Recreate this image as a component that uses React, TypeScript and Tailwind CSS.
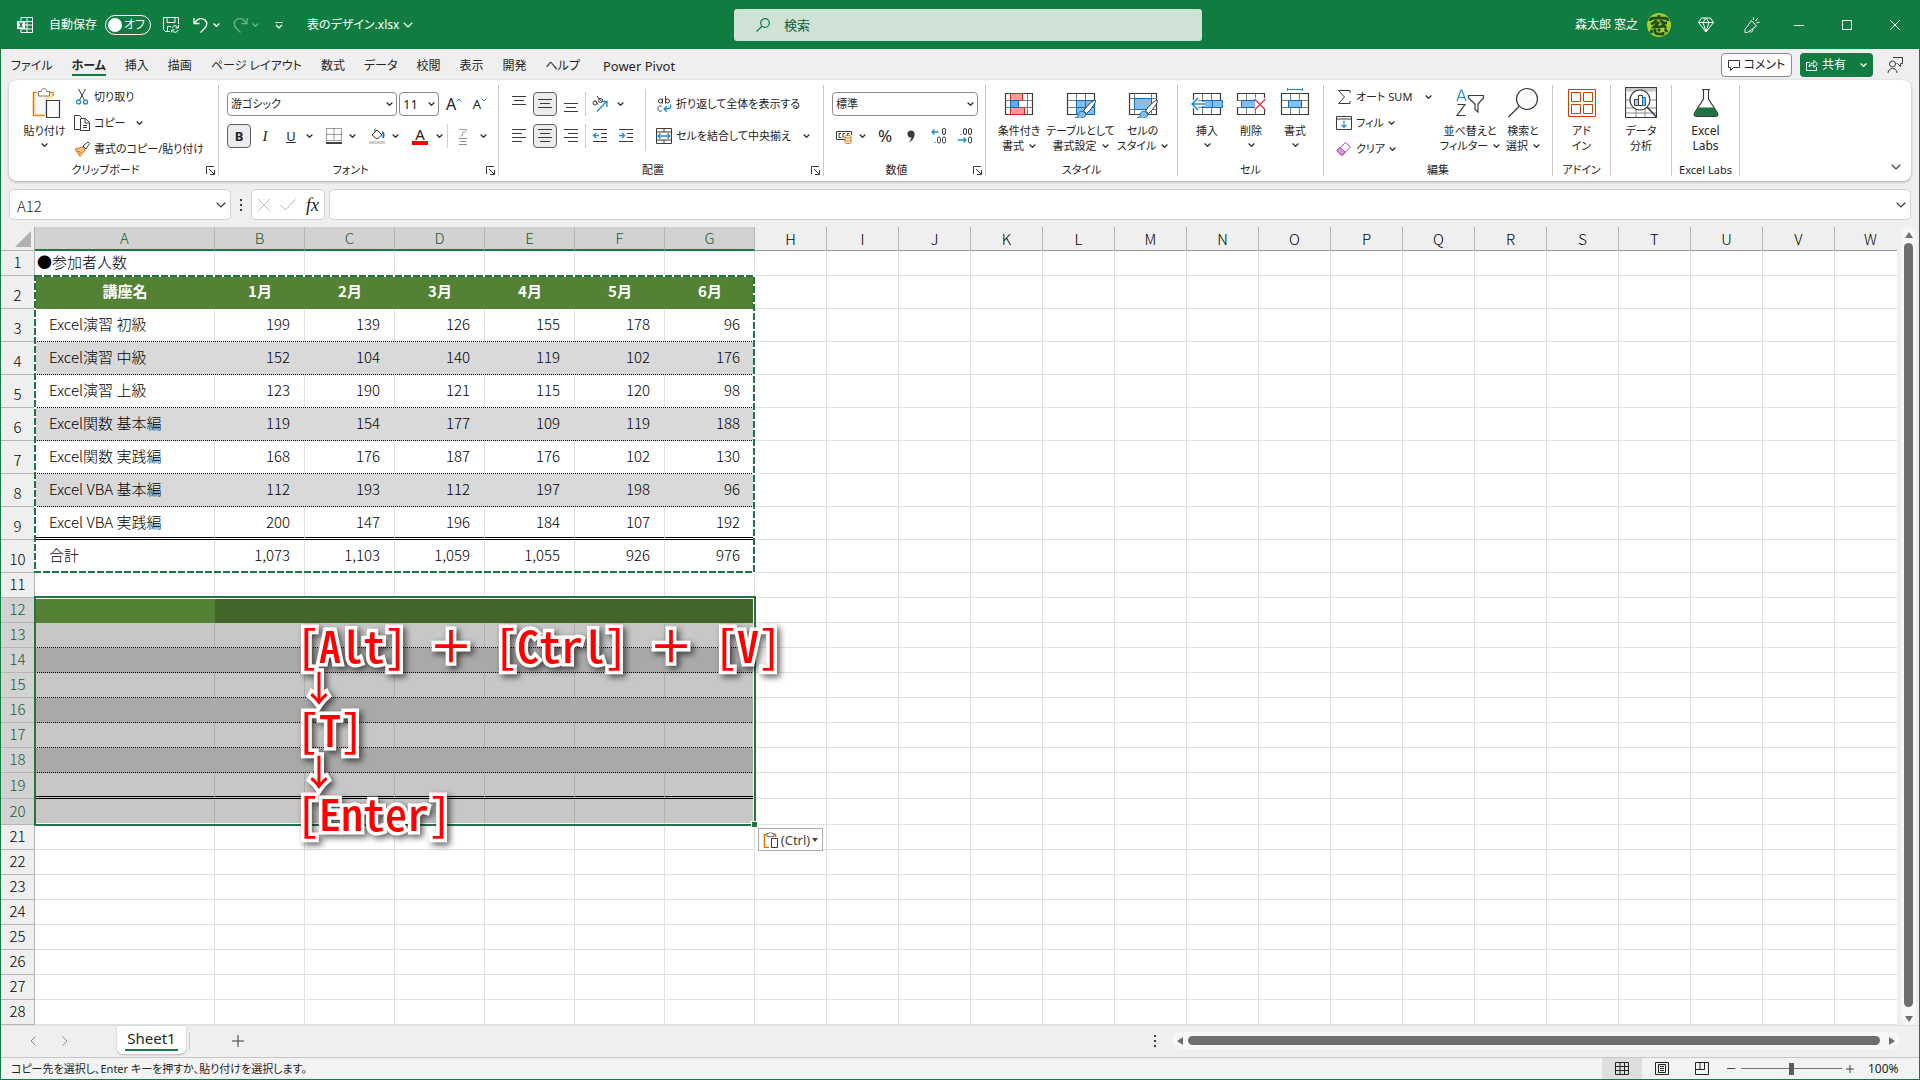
import type { ReactNode } from "react";

const INK = "#3b3a39";

const Chev = ({ big, light }: { big?: boolean; light?: boolean }) => (
    <svg
        viewBox="0 0 10 6"
        className={`${big ? "w-[10px] h-[6px]" : "w-[7px] h-[4px]"} shrink-0`}
        fill="none"
        stroke={light ? "#fff" : INK}
        strokeWidth={big ? 1.2 : 2}
    >
        <path d="M.7.8 5 5 9.3.8" />
    </svg>
);

const Launcher = () => (
    <svg viewBox="0 0 9 9" className="w-[9px] h-[9px]" fill="none" stroke={INK}>
        <path d="M.5 8V.5H8M3 3l5 5M8.5 4v4.5H4" />
    </svg>
);

const Icon = ({ children, size = "s", stroke = INK }: { children: ReactNode; size?: "s" | "l"; stroke?: string }) => (
    <svg
        viewBox={size === "s" ? "0 0 16 16" : "0 0 32 32"}
        className={size === "s" ? "w-4 h-4 shrink-0" : "w-8 h-8 shrink-0"}
        fill="none"
        stroke={stroke}
        strokeWidth="1"
    >
        {children}
    </svg>
);

const Group: React.FC<{ label?: string; width: string; launcher?: boolean; children: ReactNode }> = ({
    label,
    width,
    launcher,
    children,
}) => (
    <section className={`${width} relative shrink-0 flex flex-col h-[91px] border-r border-[#c8c8c8]`}>
        <div className="flex h-[78px]">{children}</div>
        <div className={`text-center h-[13px] leading-[13px] whitespace-nowrap ${launcher ? "pr-4" : ""}`}>{label}</div>
        {launcher && (
            <button aria-label={`${label}の設定`} className="absolute right-[3px] bottom-px">
                <Launcher />
            </button>
        )}
    </section>
);

const BigButton: React.FC<{ icon: ReactNode; lines: string[]; width: string; chev?: "inline" | "below" }> = ({
    icon,
    lines,
    width,
    chev,
}) => (
    <button className={`${width} shrink-0 flex flex-col items-center h-[77px] pt-px leading-[15px] whitespace-nowrap`}>
        {icon}
        {lines.map((line, i) => (
            <span key={line} className={`flex items-center gap-[5px] ${i === 0 ? "mt-[5px]" : ""}`}>
                {line}
                {chev === "inline" && i === lines.length - 1 && <Chev />}
            </span>
        ))}
        {chev === "below" && <span className="mt-[5px]"><Chev /></span>}
    </button>
);

const SmallButton: React.FC<{ icon: ReactNode; text: string; chev?: boolean }> = ({ icon, text, chev }) => (
    <button className="flex items-center h-[26px] whitespace-nowrap gap-1">
        {icon}
        <span>{text}</span>
        {chev && <Chev />}
    </button>
);

const Sep = () => <span className="w-px h-6 bg-[#d0d0d0] shrink-0" />;

const Tool: React.FC<{ name: string; on?: boolean; children: ReactNode }> = ({ name, on, children }) => (
    <button
        aria-label={name}
        className={`w-6 h-6 shrink-0 flex items-center justify-center rounded ${on ? "bg-[#ebebeb] border border-[#616161]" : ""}`}
    >
        {children}
    </button>
);

const Arrow = ({ name, width = "w-3" }: { name: string; width?: string }) => (
    <button aria-label={name} className={`${width} h-6 shrink-0 flex items-center justify-center`}>
        <Chev />
    </button>
);

const Combo: React.FC<{ name: string; value: string; width: string }> = ({ name, value, width }) => (
    <label className={`${width} h-6 shrink-0 flex items-center relative border border-[#8a8a8a] rounded bg-white`}>
        <span className="sr-only">{name}</span>
        <select className="appearance-none w-full h-[22px] pl-[3px] bg-transparent leading-[22px]">
            <option>{value}</option>
        </select>
        <span className="absolute right-[3px] pointer-events-none">
            <Chev />
        </span>
    </label>
);

const Lines = ({ rows }: { rows: [number, number, number][] }) => (
    <Icon>
        {rows.map(([x1, x2, y]) => (
            <path key={y} d={`M${x1} ${y}H${x2}`} />
        ))}
    </Icon>
);

const CellsIcon = ({ children }: { children?: ReactNode }) => (
    <Icon size="l">
        <path d="M2.5 7.5h27v21h-27z" fill="#fff" strokeWidth="1.2" />
        <path d="M2.5 14.5h27M2.5 21.5h27M11.5 7.5v21M20.5 7.5v21" stroke="#7a7a7a" />
        {children}
    </Icon>
);

const Brush = () => (
    <>
        <path d="M30.5 14.5c1 1-5 10-9 13l-3-2.500c3-5 10-11.500 12-10.500z" fill="#fff" />
        <path d="M18 25.500c-4-1-5 2-5 4-.5 2-2 2-3 2 3 1.500 11 1.500 11-3.500z" fill="#83beec" stroke="#0f6cbd" />
    </>
);

const PasteIcon = () => (
    <Icon size="l">
        <path d="M8 6.500H4.500v23H16M24 10V6.500h-4" stroke="#d97706" strokeWidth="1.500" />
        <path d="M6 7.500h17v4h-6v17H6z" fill="#f8f8f8" stroke="#fbd88a" strokeWidth="1.500" />
        <path d="M9.500 10V5.500h3c0-4 5-4 5 0h3V10z" fill="#fff" stroke="#7a7a7a" />
        <path d="M17.500 14.500h13v17h-13z" fill="#fafafa" strokeWidth="1.200" />
    </Icon>
);

const tabs = ["ファイル", "ホーム", "挿入", "描画", "ページ レイアウト", "数式", "データ", "校閲", "表示", "開発", "ヘルプ", "Power Pivot"];

const TitleBar = () => (
    <header className="h-[49px] shrink-0 bg-[#107c41] text-white flex items-center">
        <div className="flex-1 flex items-center pl-4 whitespace-nowrap">
            <svg viewBox="0 0 16 16" className="w-4 h-4" fill="none" stroke="#fff">
                <path d="M4 4V.5h11.500v15H4V12M4 4.500h11.500M8 8h7.500M4 12h11.500M10 .5v15" />
                <path d="M0 4h8v8H0z" fill="#fff" stroke="none" />
                <path d="m2.500 5.500 3 5m0-5-3 5" stroke="#107c41" strokeWidth="1.400" />
            </svg>
            <span className="ml-4">自動保存</span>
            <button role="switch" aria-checked="false" aria-label="自動保存" className="ml-2 w-[46px] h-5 rounded-full border border-white flex items-center pl-[2px] pr-[5px] justify-between">
                <span className="w-[14px] h-[14px] rounded-full bg-white" />
                オフ
            </button>
            <button aria-label="保存" className="ml-3">
                <Icon stroke="#fff">
                    <path d="M7 14.500H2.500l-2-2V.5h15V7M4 .5v5h8v-5M4.500 14V9.500H8" />
                    <path d="M9 11c1-3 5-3 6 0M15.500 8v3h-3M15 13c-1 3-5 3-6 0M8.500 15.500V13h3" />
                </Icon>
            </button>
            <button aria-label="元に戻す" className="ml-[14px] flex items-center gap-1">
                <Icon stroke="#fff">
                    <path d="M1 1v5.500h5.500M1.200 6.300C5 1 9 .5 12 3c3 3 2 6-1 9l-3.500 3.500" strokeWidth="1.300" />
                </Icon>
                <Chev light />
            </button>
            <button aria-label="やり直し" className="ml-3 flex items-center gap-1 opacity-40">
                <Icon stroke="#fff">
                    <path d="M15 1v5.500H9.500M14.800 6.300C11 1 7 .5 4 3c-3 3-2 6 1 9l3.500 3.500" strokeWidth="1.300" />
                </Icon>
                <Chev light />
            </button>
            <button aria-label="クイック アクセスのカスタマイズ" className="ml-4">
                <svg viewBox="0 0 8 8" className="w-2 h-2" fill="none" stroke="#fff" strokeWidth="1.200">
                    <path d="M.5 1.500h7M1 4l3 3 3-3" />
                </svg>
            </button>
            <button className="ml-6 flex items-center gap-1">
                表のデザイン.xlsx
                <Chev big light />
            </button>
        </div>
        <label className="w-[468px] h-8 rounded-[3px] bg-[#cee2d6] flex items-center pl-[22px] gap-[14px] text-[#185c37]">
            <svg viewBox="0 0 14 14" className="w-[14px] h-[14px]" fill="none" stroke="#107c41" strokeWidth="1.200">
                <circle cx="9" cy="5" r="4.300" />
                <path d="M6 8.200.500 13.500" />
            </svg>
            <input aria-label="検索" placeholder="検索" className="bg-transparent flex-1 outline-none text-[13px] placeholder:text-[#185c37]" />
        </label>
        <div className="flex-1 flex items-center justify-end whitespace-nowrap">
            <span>森太郎 窓之</span>
            <svg viewBox="0 0 24 24" className="ml-[9px] w-6 h-6" fill="none">
                <circle cx="12" cy="12" r="12" fill="#a4cf2e" />
                <path
                    d="M3 8c0-3 3-3 9-3s9 0 9 3M12 2v4M9 7c0 2-2 3-5 4m10-4c0 3 3 3 6 3M12 9l-5 5c4 0 7 0 11-1m-3-3 4 5M5 17l-1 3m4-4c-1 6 3 5 8 5v-2m-5-3 2 2m5-2 2 3"
                    stroke="#1f4d16"
                    strokeWidth="2.800"
                />
            </svg>
            <button aria-label="Premium" className="ml-[27px]">
                <Icon stroke="#fff">
                    <path d="M3.500 1h9l3 4.500L8 15 .5 5.500zM.5 5.500h15M5 5.500 8 15l3-9.500L8 1 5 5.500" />
                </Icon>
            </button>
            <button aria-label="新機能" className="ml-[30px]">
                <Icon stroke="#fff">
                    <path d="M7.500 3.500 1 12.500v3h2.500l9-6.500zM5.500 14.500c2 1.500 4-.5 3-2.500M9.500 3V.5M11.500 4l2.500-3M12.500 6l3-1" />
                </Icon>
            </button>
            <button aria-label="最小化" className="ml-[34px]">
                <svg viewBox="0 0 10 10" className="w-[10px] h-[10px]" stroke="#fff"><path d="M0 5.500h10" /></svg>
            </button>
            <button aria-label="最大化" className="ml-[38px]">
                <svg viewBox="0 0 10 10" className="w-[10px] h-[10px]" stroke="#fff" fill="none"><path d="M.5.5h9v9h-9z" /></svg>
            </button>
            <button aria-label="閉じる" className="ml-[38px] mr-[19px]">
                <svg viewBox="0 0 10 10" className="w-[10px] h-[10px]" stroke="#fff"><path d="m0 0 10 10M10 0 0 10" /></svg>
            </button>
        </div>
    </header>
);

const TabRow = () => (
    <nav className="h-[31px] shrink-0 flex items-center pl-[10px] pr-4">
        <div className="flex-1 flex gap-[19px] pt-[2px] whitespace-nowrap">
            {tabs.map(t => (
                <button
                    key={t}
                    className={t === "ホーム" ? "relative font-bold" : t === "Power Pivot" ? "ml-1 text-[13px]" : ""}
                >
                    {t}
                    {t === "ホーム" && <span className="absolute inset-x-0 -bottom-[2px] h-[2px] bg-[#107c41]" />}
                </button>
            ))}
        </div>
        <button className="w-[71px] h-6 bg-white border border-[#8a8a8a] rounded flex items-center justify-center gap-1">
            <svg viewBox="0 0 12 12" className="w-3 h-3" fill="none" stroke={INK}><path d="M.5 1.500h11v7h-6l-3 3v-3h-2z" /></svg>
            コメント
        </button>
        <button className="ml-2 w-[73px] h-6 bg-[#107c41] text-white rounded flex items-center justify-between px-[6px]">
            <span className="flex items-center gap-1">
                <svg viewBox="0 0 12 12" className="w-3 h-3" fill="none" stroke="#fff"><path d="M4 3.500H.5v8h10V8M3 8c0-3 2-4 5-4V1.500L11.500 5 8 8.500V6C6 6 4 6.500 3 8z" /></svg>
                共有
            </span>
            <Chev light />
        </button>
        <button aria-label="会話" className="ml-[14px]">
            <Icon>
                <path d="M6 .5h9.500v6h-2v3l-3-3H9.500M1 16c0-6 9-6 9 0" />
                <circle cx="5.500" cy="7" r="3" />
            </Icon>
        </button>
    </nav>
);

const Ribbon = () => (
    <div className="mx-2 h-[101px] shrink-0 bg-white rounded-lg shadow-[0_1px_3px_rgba(0,0,0,0.3)] flex pt-[5px] relative text-[11px]">
        <Group label="クリップボード" width="w-[210px]" launcher>
            <span className="w-[6px]" />
            <BigButton icon={<PasteIcon />} lines={["貼り付け"]} width="w-[59px]" chev="below" />
            <div className="flex flex-col items-start -mt-px">
                <SmallButton text="切り取り" icon={<Icon><path d="m4.500 0 6 11M11.500 0l-6 11" /><circle cx="4.500" cy="13" r="2" stroke="#1f8ad2" strokeWidth="1.300" /><circle cx="11.500" cy="13" r="2" stroke="#1f8ad2" strokeWidth="1.300" /></Icon>} />
                <div className="flex items-center gap-2">
                    <SmallButton text="コピー" icon={<Icon><path d="M6 14.500H.5V.5h5l2 2M6.500 3.500h5l4 4v8h-9zM11 4v4h4.500M9 10.500h4M9 12.500h4" /></Icon>} />
                    <Arrow name="コピーのオプション" />
                </div>
                <SmallButton text="書式のコピー/貼り付け" icon={<Icon stroke="#d97706"><path d="m1 8 8-2 2 3-5 6.500z" fill="#f9c58d" /><path d="m9 5 5-4 1.500 1.500L12 8z" stroke={INK} /><path d="m3 10 3 1m-1 2 2-2" /></Icon>} />
            </div>
        </Group>
        <Group label="フォント" width="w-[280px]" launcher>
            <div className="pl-2 pt-[7px] flex flex-col gap-2">
                <div className="flex items-center">
                    <Combo name="フォント名" value="游ゴシック" width="w-[170px]" />
                    <span className="ml-[2px] text-[13px]"><Combo name="サイズ" value="11" width="w-[40px]" /></span>
                    <span className="ml-[3px] flex gap-[2px]">
                        <Tool name="拡大"><span className="text-[16px] leading-5">A</span><svg viewBox="0 0 6 4" className="w-[6px] h-1 mb-2" fill="none" stroke="#1f8ad2"><path d="m.5 3.500 2.500-2.500 2.500 2.500" /></svg></Tool>
                        <Tool name="縮小"><span className="text-[13px] leading-5">A</span><svg viewBox="0 0 6 4" className="w-[6px] h-1 mb-2" fill="none" stroke="#1f8ad2"><path d="m.5.5 2.500 2.500L5.500.5" /></svg></Tool>
                    </span>
                </div>
                <div className="flex items-center">
                    <Tool name="太字" on><b className="text-[13px]">B</b></Tool>
                    <span className="ml-[2px] flex gap-[2px]">
                        <Tool name="斜体"><i className="font-['Liberation_Serif'] text-[15px]">I</i></Tool>
                        <Tool name="下線"><u className="text-[13px]">U</u></Tool>
                    </span>
                    <Arrow name="下線の種類" />
                    <span className="ml-[5px] mr-[2px]"><Sep /></span>
                    <Tool name="罫線"><Icon><path d="M.5.5h15v12H.5zM8 .5v12M.5 6.500h15" strokeDasharray="1 1" /><path d="M0 15h16" strokeWidth="1.500" stroke="#000" /></Icon></Tool>
                    <Arrow name="罫線の種類" />
                    <span className="ml-[5px] mr-[2px]"><Sep /></span>
                    <Tool name="塗りつぶし"><Icon><path d="m3 7 5-5 5 5-5 4zM6 4V.5" /><path d="M13 4c2 1 2 3 1 6" stroke="#1f6db5" strokeWidth="2" /><path d="M0 14.500h16" stroke="#d0d0d0" strokeWidth="3" /></Icon></Tool>
                    <Arrow name="塗りつぶしの色" />
                    <button aria-label="フォントの色" className="flex flex-col items-center ml-[11px] mr-[3px]">
                        <span className="text-[15px] leading-[13px]">A</span>
                        <span className="w-4 h-1 bg-[#f00]" />
                    </button>
                    <Arrow name="フォントの色の種類" width="w-4" />
                    <Sep />
                    <button aria-label="ふりがな" className="flex flex-col items-center text-[9px] leading-[10px] text-[#8a8a8a] ml-[10px] w-[10px]">
                        ア
                        <svg viewBox="0 0 8 7" className="w-2 h-[7px]" stroke="#8a8a8a"><path d="M0 .500h8M1 3.500h6M0 6.500h8" /></svg>
                    </button>
                    <span className="ml-[9px]"><Arrow name="ふりがなの種類" /></span>
                </div>
            </div>
        </Group>
        <Group label="配置" width="w-[325px]" launcher>
            <div className="pl-2 pt-[7px] flex flex-col gap-2">
                <div className="flex items-center gap-[2px]">
                    <Tool name="上揃え"><Lines rows={[[1, 15, 0.5], [3, 13, 4.5], [1, 15, 8.5]]} /></Tool>
                    <Tool name="上下中央" on><Lines rows={[[1, 15, 3.5], [3, 13, 7.5], [1, 15, 11.5]]} /></Tool>
                    <Tool name="下揃え"><Lines rows={[[1, 15, 7.5], [3, 13, 11.5], [1, 15, 15.5]]} /></Tool>
                    <Sep />
                    <Tool name="方向"><Icon><path d="M5 15.500 14.500 5.500M9.500 5.500h5.500V11" stroke="#1f8ad2" strokeWidth="1.300" /><circle cx="3" cy="7" r="2" /><circle cx="8.500" cy="4.500" r="2" /><path d="m3 4.500 3 4M5 0l4 5" /></Icon></Tool>
                    <Arrow name="方向の種類" />
                </div>
                <div className="flex items-center gap-[2px]">
                    <Tool name="左揃え"><Lines rows={[[1, 15, 1.5], [1, 11, 5.5], [1, 15, 9.5], [1, 11, 13.5]]} /></Tool>
                    <Tool name="中央揃え" on><Lines rows={[[1, 15, 1.5], [3, 13, 5.5], [1, 15, 9.5], [3, 13, 13.5]]} /></Tool>
                    <Tool name="右揃え"><Lines rows={[[1, 15, 1.5], [5, 15, 5.5], [1, 15, 9.5], [5, 15, 13.5]]} /></Tool>
                    <Sep />
                    <Tool name="インデントを減らす"><Icon><path d="M1 1.500h14M9 5.500h6M9 9.500h6M1 13.500h14" /><path d="M7 7.500H1.500M4 5 1.500 7.500 4 10" stroke="#1f8ad2" strokeWidth="1.300" /></Icon></Tool>
                    <Tool name="インデントを増やす"><Icon><path d="M1 1.500h14M9 5.500h6M9 9.500h6M1 13.500h14" /><path d="M1 7.500h5.500M4 5l2.500 2.500L4 10" stroke="#1f8ad2" strokeWidth="1.300" /></Icon></Tool>
                </div>
            </div>
            <div className="ml-[7px] mt-1 w-px h-[62px] bg-[#d0d0d0]" />
            <div className="pl-[10px] pt-[7px] flex flex-col gap-2">
                <button className="h-6 flex items-center gap-1 whitespace-nowrap">
                    <svg viewBox="0 0 16 16" className="w-4 h-4 shrink-0" fill="none" stroke={INK}>
                        <circle cx="4.500" cy="5" r="2" />
                        <path d="M6.500 2.500v5M9.500 0v7.500M6 10.500c-2-1.500-4 0-4 2s2 3.500 4 2" />
                        <circle cx="11.500" cy="5" r="2" />
                        <path d="M14.500 8.500c1 3-1 4.500-6 4.500M11 10l-3 3 3 3" stroke="#1f8ad2" strokeWidth="1.300" />
                    </svg>
                    折り返して全体を表示する
                </button>
                <button className="h-6 flex items-center gap-1 whitespace-nowrap">
                    <Icon><path d="M.5.5h15v15H.5zM.5 4h15M.5 12h15M8 .5V4M8 12v3.500" /><path d="M2 8h12M4.500 5.500 2 8l2.500 2.500M11.500 5.500 14 8l-2.500 2.500" stroke="#1f8ad2" strokeWidth="1.300" /></Icon>
                    セルを結合して中央揃え
                    <span className="ml-2"><Chev /></span>
                </button>
            </div>
        </Group>
        <Group label="数値" width="w-[162px]" launcher>
            <div className="pl-2 pt-[7px] flex flex-col gap-2">
                <Combo name="表示形式" value="標準" width="w-[146px]" />
                <div className="flex items-center">
                    <Tool name="通貨"><Icon><path d="M9 11.500H.5v-8h15V7M5 5.500H3v4h2M7 10V5.500h2M11.500 7V5.500h2" /><path d="M9 8.500c0-1.500 6-1.500 6 0v6c0 1.500-6 1.500-6 0zM9 9c0 1.500 6 1.500 6 0M9 12c0 1.500 6 1.500 6 0" stroke="#d97706" fill="#fff" /></Icon></Tool>
                    <Arrow name="通貨の種類" />
                    <span className="ml-[5px] flex gap-[2px]">
                        <Tool name="パーセント"><span className="text-[17px]">%</span></Tool>
                        <Tool name="桁区切り"><svg viewBox="0 0 8 13" className="w-2 h-[13px]" fill={INK}><circle cx="4" cy="4" r="3.500" /><path d="M7.500 4c0 4-2 7-6 8.500 2-2 3-4 3-6z" /></svg></Tool>
                    </span>
                    <span className="mx-[2px]"><Sep /></span>
                    <span className="flex gap-[2px]">
                        <Tool name="小数点以下を増やす">
                            <svg viewBox="0 0 16 16" className="w-4 h-4" fill="none" stroke={INK}>
                                <path d="M7.500 4H1M3.500 1.500 1 4l2.500 2.500" stroke="#1f8ad2" strokeWidth="1.300" />
                                <rect x="11.500" y=".5" width="3" height="6" rx="1.500" />
                                <rect x="6.500" y="9" width="3" height="6" rx="1.500" />
                                <rect x="11.500" y="9" width="3" height="6" rx="1.500" />
                                <path d="M3.500 14.500h1" />
                            </svg>
                        </Tool>
                        <Tool name="小数点以下を減らす">
                            <svg viewBox="0 0 16 16" className="w-4 h-4" fill="none" stroke={INK}>
                                <path d="M1 12h8M6.500 9.500 9 12l-2.500 2.500" stroke="#1f8ad2" strokeWidth="1.300" />
                                <rect x="6.500" y=".5" width="3" height="6" rx="1.500" />
                                <rect x="11.500" y=".5" width="3" height="6" rx="1.500" />
                                <rect x="11.500" y="9" width="3" height="6" rx="1.500" />
                                <path d="M3.500 6.500h1" />
                            </svg>
                        </Tool>
                    </span>
                </div>
            </div>
        </Group>
        <Group label="スタイル" width="w-[192px]">
            <span className="w-[2px]" />
            <BigButton
                width="w-[62px]"
                lines={["条件付き", "書式"]}
                chev="inline"
                icon={<Icon size="l"><path d="M2.500 7.500h27v21h-27z" fill="#fff" strokeWidth="1.200" /><path d="M2.500 14.500h27M2.500 21.500h27M7.500 7.500v21M24.500 7.500v21" stroke="#7a7a7a" /><path d="M7.500 7.500h12v7h-12zM7.500 21.500h14v7h-14z" fill="#ff9a9a" stroke="#e02020" /><path d="M7.500 14.500h8v7h-8z" fill="#60aee8" stroke="#0f6cbd" /></Icon>}
            />
            <BigButton
                width="w-[61px]"
                lines={["テーブルとして", "書式設定"]}
                chev="inline"
                icon={<CellsIcon><path d="M11.500 14.500h18v14h-18zM11.500 21.500h18M20.500 14.500v14" fill="#83beec" stroke="#0f6cbd" /><Brush /></CellsIcon>}
            />
            <BigButton
                width="w-[63px]"
                lines={["セルの", "スタイル"]}
                chev="inline"
                icon={<Icon size="l"><path d="M2.500 7.500h27v21h-27z" fill="#fff" strokeWidth="1.200" /><path d="M7.500 7.500v21M24.500 7.500v21M2.500 12.500h27M2.500 23.500h27" stroke="#7a7a7a" /><path d="M7.500 12.500h17v11h-17z" fill="#83beec" stroke="#0f6cbd" /><Brush /></Icon>}
            />
        </Group>
        <Group label="セル" width="w-[146px]">
            <span className="w-[7px]" />
            <BigButton width="w-[44px]" lines={["挿入"]} chev="below" icon={<CellsIcon><path d="M11.500 14.500h20v7h-20zM21.500 14.500v7" fill="#83beec" stroke="#0f6cbd" /><path d="M14 18H1M7 12l-6 6 6 6" stroke="#fff" strokeWidth="4" /><path d="M14 18H1M7 12l-6 6 6 6" stroke="#1f8ad2" strokeWidth="1.500" /></CellsIcon>} />
            <BigButton width="w-[44px]" lines={["削除"]} chev="below" icon={<CellsIcon><path d="M1 15h5v6H1z" fill="#fff" stroke="none" /><path d="M6.500 14.500h14v7h-14z" fill="#83beec" stroke="#0f6cbd" /><path d="M20 12h12v12H20z" fill="#fff" stroke="none" /><path d="m19.500 13 11 11m0-11-11 11" stroke="#f04040" strokeWidth="1.500" /></CellsIcon>} />
            <BigButton width="w-[44px]" lines={["書式"]} chev="below" icon={<CellsIcon><path d="M9.500 14.500h13v7h-13z" fill="#83beec" stroke="#0f6cbd" /><path d="M8.500 2v3m15-3v3m-15-1.500h15" stroke="#1f8ad2" /></CellsIcon>} />
        </Group>
        <Group label="編集" width="w-[229px]">
            <div className="pl-3 w-[117px] flex flex-col items-start -mt-px">
                <div className="flex items-center gap-[10px]">
                    <SmallButton text="オート SUM" icon={<Icon><path d="M14 4V1.500H2.500L8.500 8l-6 6.500H14V12" /></Icon>} />
                    <Arrow name="オート SUM の種類" />
                </div>
                <SmallButton text="フィル" chev icon={<Icon><path d="M.5 1.500h15v13H.5zM.5 4h15" /><path d="M8 5.500v7M5.500 10 8 12.500l2.500-2.500" stroke="#1f8ad2" strokeWidth="1.200" /></Icon>} />
                <SmallButton text="クリア" chev icon={<Icon stroke="#a43db0"><path d="m9.500 1.500 5 4.500-8.500 8.500L1 9.500z" /><path d="m1 9.500 3-3 5 4.500-3 3.500z" fill="#d9a0e0" /></Icon>} />
            </div>
            <BigButton width="w-[58px]" lines={["並べ替えと", "フィルター"]} chev="inline" icon={<Icon size="l"><path d="m3 15 4-11h.8L12 15M4.500 11.500h6" stroke="#1f8ad2" strokeWidth="1.200" /><path d="M3.500 18.500h7.500l-8 11h8.500M14.500 9.500h15v2.500l-5.500 6v8l-3-2.500V18l-6.500-6z" strokeWidth="1.200" /></Icon>} />
            <BigButton width="w-[48px]" lines={["検索と", "選択"]} chev="inline" icon={<Icon size="l"><circle cx="20" cy="13" r="10.500" fill="#fafafa" strokeWidth="1.200" /><path d="M12 20.500 1.500 31" strokeWidth="1.200" /></Icon>} />
        </Group>
        <Group label="アドイン" width="w-[58px]">
            <BigButton width="w-[57px]" lines={["アド", "イン"]} icon={<Icon size="l" stroke="#d83b01"><path d="M2.500 3.500h27v27h-27zM5.500 6.500h9v9h-9zM17.500 6.500h9v9h-9zM5.500 18.500h9v9h-9zM17.500 18.500h9v9h-9z" /></Icon>} />
        </Group>
        <Group width="w-[61px]">
            <BigButton width="w-[60px]" lines={["データ", "分析"]} icon={<Icon size="l"><path d="M.5 1.500h31v30H.5z" strokeWidth="1.200" /><path d="M1 2h30v3.500H1z" fill="#c8c8c8" stroke="none" /><path d="M1 14h5M1 22h30M1 27h30M11 22v9M20 22v9M26 14h5" stroke="#8a8a8a" /><circle cx="15" cy="14" r="10" fill="#fff" strokeWidth="1.200" /><path d="m22 21 9.500 10" strokeWidth="1.500" /><path d="M9.500 13.500h4v6h-4z" fill="#c8c8c8" /><path d="M13.500 9.500h4v10h-4z" fill="#fff" /><path d="M17.500 11.500h3v8h-3z" fill="#83beec" stroke="#0f6cbd" /></Icon>} />
        </Group>
        <Group label="Excel Labs" width="w-[68px]">
            <div className="text-[12px]">
                <BigButton width="w-[67px]" lines={["Excel", "Labs"]} icon={<Icon size="l"><path d="M12 3.500h8M13.500 3.500V13L4.500 27c-1 2 0 3.500 2 3.500h19c2 0 3-1.500 2-3.500l-9-14V3.500" strokeWidth="1.200" /><path d="M8 21.500h16l3.500 6c.5 1.500 0 2.500-1.500 2.500H6c-1.500 0-2-1-1.500-2.500z" fill="#217346" stroke="none" /></Icon>} />
            </div>
        </Group>
        <button aria-label="リボンを折りたたむ" className="absolute right-[10px] bottom-[11px]">
            <Chev big />
        </button>
    </div>
);

const Dots = () => (
    <span className="w-[2px] flex flex-col gap-[3px]">
        <i className="w-[2px] h-[2px] bg-[#3b3a39]" />
        <i className="w-[2px] h-[2px] bg-[#3b3a39]" />
        <i className="w-[2px] h-[2px] bg-[#3b3a39]" />
    </span>
);

const FormulaBar = () => (
    <div className="mt-2 mx-2 h-[31px] shrink-0 flex items-stretch text-[14px]">
        <label className="w-[222px] bg-white border border-[#d1d1d1] rounded flex items-center pl-[7px] pr-1">
            <span className="sr-only">名前ボックス</span>
            <input defaultValue="A12" className="flex-1 min-w-0 h-full pt-[2px] leading-6 outline-none font-['Noto_Sans_CJK_JP'] font-light text-[15px]" />
            <Chev big />
        </label>
        <span className="w-5 flex items-center justify-center">
            <Dots />
        </span>
        <div className="w-[74px] bg-white border border-[#d1d1d1] rounded flex items-center justify-between pl-[6px] pr-[5px]">
            <button aria-label="キャンセル"><svg viewBox="0 0 12 12" className="w-3 h-3" stroke="#b8b8b8"><path d="m0 0 12 12M12 0 0 12" /></svg></button>
            <button aria-label="入力"><svg viewBox="0 0 16 12" className="w-4 h-3" stroke="#b8b8b8" fill="none"><path d="m.5 6 5 5L15.500.5" /></svg></button>
            <button aria-label="関数の挿入" className="font-['Liberation_Serif'] italic text-[18px] font-medium">fx</button>
        </div>
        <label className="ml-1 flex-1 bg-white border border-[#d1d1d1] rounded flex items-center pr-1">
            <span className="sr-only">数式バー</span>
            <input className="flex-1 outline-none px-2" />
            <Chev big />
        </label>
    </div>
);

const columns = "ABCDEFGHIJKLMNOPQRSTUVW".split("");

const sheet: Record<number, string[]> = {
    1: ["●参加者人数"],
    2: ["講座名", "1月", "2月", "3月", "4月", "5月", "6月"],
    3: ["Excel演習 初級", "199", "139", "126", "155", "178", "96"],
    4: ["Excel演習 中級", "152", "104", "140", "119", "102", "176"],
    5: ["Excel演習 上級", "123", "190", "121", "115", "120", "98"],
    6: ["Excel関数 基本編", "119", "154", "177", "109", "119", "188"],
    7: ["Excel関数 実践編", "168", "176", "187", "176", "102", "130"],
    8: ["Excel VBA 基本編", "112", "193", "112", "197", "198", "96"],
    9: ["Excel VBA 実践編", "200", "147", "196", "184", "107", "192"],
    10: ["合計", "1,073", "1,103", "1,059", "1,055", "926", "976"],
};

const rowHeight = (r: number) => {
    if (r >= 2 && r <= 10) return "h-[33px]";
    if (r === 19 || r === 20) return "h-[26px]";
    return "h-[25px]";
};

const cellClass = (r: number, c: number) => {
    if (c > 6 || r === 1 || r === 11 || r > 20) return "font-light bg-white border-r border-b border-[#e1e1e1]";
    if (r === 2) return "bg-[#548235] text-white font-bold text-center";
    if (r === 12) return c === 0 ? "bg-[#548235]" : "bg-[#426629]";
    const selected = r > 12;
    const striped = r % 2 === 0 && r !== 10 && r !== 20;
    const bg = selected ? (striped ? "bg-[#a9a9a9]" : "bg-[#c7c7c7]") : striped ? "bg-[#d9d9d9]" : "bg-white";
    const side = striped ? "border-r border-r-transparent" : selected ? "border-r border-r-[#afafaf]" : "border-r border-r-[#e1e1e1]";
    const last = r === 10 || r === 20;
    const bottom = last ? "border-b border-b-[#e1e1e1]" : r === 9 || r === 19 ? "border-b-3 border-double border-b-black" : "";
    return `font-light ${bg} ${side} ${bottom} ${c === 0 ? "pl-[14px]" : "text-right pr-[14px]"}`;
};

// dotted rule under the body rows of both tables
const dotted = (r: number, c: number) =>
    c <= 6 && ((r >= 3 && r <= 8) || (r >= 13 && r <= 18))
        ? "relative after:absolute after:left-0 after:-right-px after:bottom-0 after:h-px after:bg-[repeating-linear-gradient(90deg,#000_0_1px,transparent_1px_2px)]"
        : "";

const Sheet = () => (
    <div className="relative flex-1 min-w-0 overflow-hidden font-['Noto_Sans_CJK_JP',sans-serif] text-[15px] text-black [font-feature-settings:normal]">
        <table className="table-fixed border-separate border-spacing-0 w-[1906px] leading-5">
            <colgroup>
                <col className="w-[34px]" />
                <col className="w-[180px]" />
                {columns.slice(1).map((c, i) => (
                    <col key={c} className={i < 6 ? "w-[90px]" : "w-[72px]"} />
                ))}
            </colgroup>
            <thead>
                <tr className="h-6">
                    <th className="p-0 border-r border-b border-[#b0b0b0] bg-[#efefef] align-bottom">
                        <svg viewBox="0 0 16 16" className="ml-auto mr-[3px] mb-[3px] w-4 h-4" fill="#b2b2b2"><path d="M16 0v16H0z" /></svg>
                    </th>
                    {columns.map((c, i) => (
                        <th
                            key={c}
                            className={`p-0 font-light border-r border-[#b5b5b5] ${i < 7 ? "bg-[#d2d2d2] text-[#185c37] border-b-2 border-b-[#107c41]" : "bg-[#efefef] border-b border-b-[#999]"}`}
                        >
                            {c}
                        </th>
                    ))}
                </tr>
            </thead>
            <tbody>
                {Array.from({ length: 28 }, (_, i) => i + 1).map(r => (
                    <tr key={r} className={rowHeight(r)}>
                        <th
                            className={`p-0 pb-[2px] font-light align-bottom leading-[22px] border-r border-b border-[#b5b5b5] ${r >= 12 && r <= 20 ? "bg-[#d2d2d2] text-[#185c37]" : "bg-[#efefef]"}`}
                        >
                            {r}
                        </th>
                        {columns.map((c, i) => (
                            <td key={c} className={`p-0 ${r === 9 ? "pb-px" : "pb-[3px]"} whitespace-nowrap ${cellClass(r, i)} ${dotted(r, i)}`}>
                                {r === 1 && i === 0 ? <span className="pl-[2px]">{sheet[1][0]}</span> : sheet[r]?.[i]}
                            </td>
                        ))}
                    </tr>
                ))}
            </tbody>
        </table>

        {/* marching ants round the copied range */}
        <svg className="absolute left-[33px] top-12 w-[722px] h-[298px]" fill="none">
            <rect x="1" y="1" width="719" height="296" stroke="#fff" strokeWidth="2" />
            <rect x="1" y="1" width="719" height="296" stroke="#217346" strokeWidth="2" strokeDasharray="7 2" />
        </svg>

        <div className="absolute left-[33px] top-[369px] w-[722px] h-[230px] border-2 border-[#217346]">
            <div className="w-full h-full border-y border-r border-white" />
            <span className="absolute -right-[3px] -bottom-[3px] w-[6px] h-[6px] bg-[#217346] border-t border-l border-white" />
        </div>

        <button className="absolute left-[757px] top-[601px] w-[65px] h-[23px] bg-white border border-[#ababab] flex items-center justify-center gap-[2px] font-['Noto_Sans',sans-serif] text-[13px] text-[#444]">
            <Icon>
                <path d="M4 2.500H1.500v13H6M10 2.500h2.500V5" stroke="#d97706" strokeWidth="1.500" />
                <path d="M4 4.500v-3h2c0-2 3-2 3 0h2v3z" stroke="#7a7a7a" />
                <path d="M8.500 6.500h6v9h-6z" fill="#fff" />
            </Icon>
            (Ctrl)
            <svg viewBox="0 0 6 4" className="w-[6px] h-1" fill="#444"><path d="M0 0h6L3 4z" /></svg>
        </button>

        <div className="absolute left-[296px] top-[396px] flex flex-col whitespace-pre font-medium text-[44px] leading-[42px] text-[#f00] [font-feature-settings:'hwid'] [paint-order:stroke_fill] [-webkit-text-stroke:7px_white] drop-shadow-[3px_3px_3px_rgba(0,0,0,0.6)]">
            <span>
                {"[Alt] "}
                <span className="[font-feature-settings:normal]">＋</span>
                {" [Ctrl] "}
                <span className="[font-feature-settings:normal]">＋</span>
                {" [V]"}
            </span>
            <span className="pl-1 text-[36px]">↓</span>
            <span>[T]</span>
            <span className="pl-1 text-[36px]">↓</span>
            <span>[Enter]</span>
        </div>
    </div>
);

const Tri = ({ d }: { d: string }) => (
    <svg viewBox="0 0 8 8" className="w-2 h-2 shrink-0" fill="#6e6e6e"><path d={d} /></svg>
);

const SheetTabs = () => (
    <div className="h-8 shrink-0 border-t border-[#e1e1e1] flex items-center pb-[2px]">
        <div className="flex items-center gap-[26px] pl-[29px] w-[116px]">
            <button aria-label="前のシート"><svg viewBox="0 0 6 10" className="w-[6px] h-[10px]" fill="none" stroke="#8a8a8a"><path d="M5.500.5 1 5l4.500 4.500" /></svg></button>
            <button aria-label="次のシート"><svg viewBox="0 0 6 10" className="w-[6px] h-[10px]" fill="none" stroke="#8a8a8a"><path d="M.5.500 5 5 .5 9.500" /></svg></button>
        </div>
        <button className="self-start w-[69px] h-[28px] bg-white rounded-b-md shadow-[0_1px_2px_rgba(0,0,0,0.25)] text-[15px] flex flex-col items-center pt-px">
            <span className="leading-[22px] border-b-2 border-[#107c41] px-[2px]">Sheet1</span>
        </button>
        <span className="ml-[3px] w-px h-[18px] bg-[#c8c8c8]" />
        <button aria-label="新しいシート" className="ml-[42px]"><svg viewBox="0 0 12 12" className="w-3 h-3" stroke={INK}><path d="M6 0v12M0 6h12" /></svg></button>
        <span className="flex-1" />
        <Dots />
        <div className="ml-4 mr-[19px] w-[728px] h-[17px] rounded-full bg-[#f7f7f7] flex items-center px-1 gap-1">
            <Tri d="M7 0v8L1 4z" />
            <span className="flex-1 mr-1 h-[9px] rounded-full bg-[#6e6e6e]" />
            <Tri d="M1 0v8l6-4z" />
        </div>
    </div>
);

const StatusBar = () => (
    <footer className="h-[22px] shrink-0 border-t border-[#c6c6c6] bg-[#f3f3f3] flex items-center pl-[10px] pr-[19px]">
        <span className="flex-1 text-[11px]">コピー先を選択し、Enter キーを押すか、貼り付けを選択します。</span>
        <button aria-label="標準" className="w-10 h-full bg-[#dedede] flex items-center justify-center"><svg viewBox="0 0 14 13" className="w-[14px] h-[13px]" fill="none" stroke="#222"><path d="M.5.5h13v12H.5zM5 .5v12M9.500.5v12M.5 4.500h13M.5 8.500h13" /></svg></button>
        <button aria-label="ページ レイアウト" className="w-10 h-full flex items-center justify-center"><svg viewBox="0 0 14 13" className="w-[14px] h-[13px]" fill="none" stroke="#222"><path d="M.5.5h13v12H.5zM3.500 2.500h7v8h-7zM5 4.500h4M5 6.500h4M5 8.500h4" /></svg></button>
        <button aria-label="改ページ プレビュー" className="w-10 h-full flex items-center justify-center"><svg viewBox="0 0 14 13" className="w-[14px] h-[13px]" fill="none" stroke="#222"><path d="M.5.5h13v12H.5zM.5 7.500h9v-7M5 .5v7" /></svg></button>
        <button aria-label="縮小" className="ml-[5px] w-2 h-px bg-[#444]" />
        <input
            type="range"
            aria-label="ズーム"
            defaultValue={50}
            className="ml-[6px] mr-1 w-[101px] h-3 appearance-none bg-[linear-gradient(#767676,#767676)] bg-[length:100%_1px] bg-center bg-no-repeat [&::-webkit-slider-thumb]:appearance-none [&::-webkit-slider-thumb]:w-[5px] [&::-webkit-slider-thumb]:h-3 [&::-webkit-slider-thumb]:bg-[#5c5c5c]"
        />
        <button aria-label="拡大"><svg viewBox="0 0 8 8" className="w-2 h-2" stroke="#444"><path d="M4 0v8M0 4h8" /></svg></button>
        <span className="ml-[14px] w-8">100%</span>
    </footer>
);

export default function App() {
    return (
        <div className="min-h-screen flex flex-col bg-[#efefef] border-x border-b border-[#107c41] text-[12px] leading-4 text-[#242424] font-['Noto_Sans','Noto_Sans_CJK_JP',sans-serif] [font-feature-settings:'palt']">
            <TitleBar />
            <TabRow />
            <Ribbon />
            <FormulaBar />
            <main className="mt-[7px] flex-1 flex">
                <Sheet />
                <div className="mr-[3px] ml-1 w-[15px] rounded-full bg-[#f7f7f7] flex flex-col items-center pt-1 pb-[2px] gap-1">
                    <Tri d="M0 7h8L4 1z" />
                    <span className="flex-1 mb-1 w-[9px] rounded-full bg-[#6e6e6e]" />
                    <Tri d="M0 1h8L4 7z" />
                </div>
            </main>
            <SheetTabs />
            <StatusBar />
        </div>
    );
}
